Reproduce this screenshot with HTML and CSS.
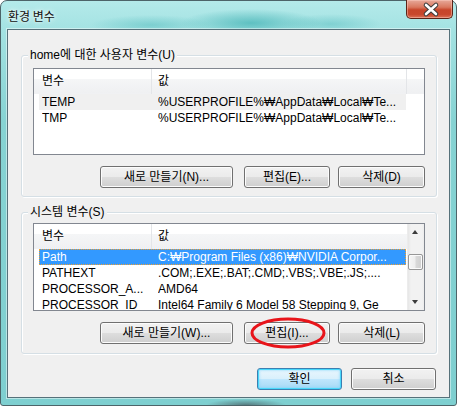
FILE: index.html
```html
<!DOCTYPE html>
<html>
<head>
<meta charset="utf-8">
<title>환경 변수</title>
<link rel="stylesheet" href="styles.css">
</head>
<body>
<div class="window">
  <div class="titlebar">
    <span class="title">환경 변수</span>
    <div class="close">
      <svg width="47" height="19" viewBox="0 0 47 19">
        <path d="M19 5 L29 14 M29 5 L19 14" stroke="#3b3b3b" stroke-width="4.6" stroke-linecap="round"/>
        <path d="M19 5 L29 14 M29 5 L19 14" stroke="#ffffff" stroke-width="2.6" stroke-linecap="round"/>
      </svg>
    </div>
  </div>
  <div class="client">
    <div class="group g1">
      <div class="group-label">home에 대한 사용자 변수(U)</div>
      <div class="list l1">
        <div class="list-main">
          <div class="hdr">
            <div class="h h1">변수</div>
            <div class="h h2">값</div>
            <div class="h h3"></div>
          </div>
          <div class="row inactive"><span class="c1">TEMP</span><span class="c2">%USERPROFILE%₩AppData₩Local₩Te...</span></div>
          <div class="row"><span class="c1">TMP</span><span class="c2">%USERPROFILE%₩AppData₩Local₩Te...</span></div>
        </div>
      </div>
      <div class="btnrow">
        <button class="btn b-wide">새로 만들기(N)...</button>
        <button class="btn b-mid">편집(E)...</button>
        <button class="btn b-del">삭제(D)</button>
      </div>
    </div>

    <div class="group g2">
      <div class="group-label">시스템 변수(S)</div>
      <div class="list l2">
        <div class="list-main">
          <div class="hdr">
            <div class="h h1">변수</div>
            <div class="h h2">값</div>
          </div>
          <div class="row selected"><span class="c1">Path</span><span class="c2">C:₩Program Files (x86)₩NVIDIA Corpor...</span></div>
          <div class="row"><span class="c1">PATHEXT</span><span class="c2">.COM;.EXE;.BAT;.CMD;.VBS;.VBE;.JS;....</span></div>
          <div class="row"><span class="c1">PROCESSOR_A...</span><span class="c2">AMD64</span></div>
          <div class="row"><span class="c1">PROCESSOR_ID</span><span class="c2">Intel64 Family 6 Model 58 Stepping 9, Ge</span></div>
        </div>
        <div class="scrollbar">
          <div class="arrow up"></div>
          <div class="track">
            <div class="thumb"></div>
          </div>
          <div class="arrow down"></div>
        </div>
      </div>
      <div class="btnrow">
        <button class="btn b-wide">새로 만들기(W)...</button>
        <button class="btn b-mid">편집(I)...</button>
        <button class="btn b-del">삭제(L)</button>
      </div>
    </div>

    <div class="dlgbtns">
      <button class="btn b-ok default">확인</button>
      <button class="btn b-ok">취소</button>
    </div>
  </div>

  <svg class="mark" width="80" height="36" viewBox="0 0 80 36">
    <ellipse cx="40" cy="18" rx="36" ry="14" fill="none" stroke="#e8141a" stroke-width="3"/>
  </svg>
</div>
</body>
</html>
```

FILE: styles.css
```css
* { box-sizing: border-box; }

html, body {
  margin: 0;
  padding: 0;
}

body {
  width: 457px;
  height: 406px;
  overflow: hidden;
  background: #ffffff;
  font-family: "Liberation Sans", "Noto Sans CJK KR", sans-serif;
  font-size: 12px;
  color: #000;
}

.window {
  position: relative;
  width: 457px;
  height: 406px;
  display: flex;
  flex-direction: column;
  padding: 0 6px 7px 6px;
  border: 1px solid #4d6469;
  border-radius: 7px 7px 3px 3px;
  background:
    radial-gradient(ellipse 70px 14px at 250px 22px, rgba(70, 180, 182, 0.75), rgba(70, 180, 182, 0)),
    radial-gradient(ellipse 60px 10px at 150px 24px, rgba(90, 190, 192, 0.55), rgba(90, 190, 192, 0)),
    radial-gradient(ellipse 50px 10px at 330px 23px, rgba(90, 190, 192, 0.5), rgba(90, 190, 192, 0)),
    radial-gradient(ellipse 40px 6px at 245px 404px, rgba(70, 90, 95, 0.7), rgba(70, 90, 95, 0)),
    linear-gradient(to bottom, #b4eaea 0px, #a3e2e2 30px, #86d3d3 120px, #7ecfd0 100%);
}

.titlebar {
  height: 28px;
  display: flex;
  justify-content: space-between;
  align-items: flex-start;
  flex: none;
}

.title {
  margin: 8px 0 0 1px;
  font-family: "Noto Sans CJK KR", sans-serif;
  font-size: 12px;
  line-height: 14px;
  color: #101010;
  text-shadow: 0 0 6px rgba(255, 255, 255, 0.95), 0 0 3px rgba(255, 255, 255, 0.9);
}

.close {
  width: 47px;
  height: 19px;
  margin: -1px -3px 0 0;
  border: 1px solid #5b2417;
  border-top: none;
  border-radius: 0 0 5px 5px;
  background: linear-gradient(to bottom, #e7a99a 0%, #d9785f 40%, #c7452a 55%, #c8472c 80%, #dc7257 100%);
  box-shadow: inset 0 0 0 1px rgba(255, 210, 200, 0.45);
}

.close svg { display: block; }

.client {
  flex: 1;
  display: flex;
  flex-direction: column;
  border: 1px solid #56717a;
  box-shadow: 0 0 0 1px rgba(255, 255, 255, 0.45);
  background: #f0f0f0;
  padding: 0 12px 0 13px;
}

.group {
  border: 1px solid #d5dfe5;
  border-radius: 3px;
  box-shadow: inset 1px 1px 0 #ffffff, 1px 1px 0 #ffffff;
  padding: 0 11px 8px 11px;
}

.g1 { margin-top: 25px; }
.g2 { margin-top: 15px; padding-bottom: 9px; }

.group-label {
  width: max-content;
  height: 12px;
  line-height: 12px;
  margin: -7px 0 0 -5px;
  padding: 0 2px;
  background: #f0f0f0;
  white-space: nowrap;
}

.list {
  display: flex;
  border: 1px solid #828790;
  background: #ffffff;
  overflow: hidden;
}

.l1 { height: 87px; margin-top: 7px; }
.l2 { height: 88px; margin-top: 5px; }

.list-main {
  flex: 1;
  min-width: 0;
  overflow: hidden;
}

.hdr {
  display: flex;
  height: 25px;
  background: linear-gradient(to bottom, #ffffff 0%, #ffffff 42%, #f5f6f7 42%, #eff0f2 100%);
  border-bottom: 1px solid #f0f1f3;
}

.h {
  line-height: 25px;
  height: 25px;
  white-space: nowrap;
}

.h1 {
  width: 118px;
  padding-left: 8px;
  border-right: 1px solid #e3e5e8;
}

.h2 {
  width: 255px;
  padding-left: 6px;
  border-right: 1px solid #e3e5e8;
}

.l2 .h2 { width: 254px; border-right: none; }

.h3 { flex: 1; }

.row {
  display: flex;
  height: 16px;
  line-height: 16px;
  width: 367px;
  margin-left: 5px;
  padding-left: 3px;
  white-space: nowrap;
}

.row .c1 {
  width: 116px;
  flex: none;
  overflow: hidden;
}

.row .c2 {
  flex: 1;
  overflow: hidden;
}

.row.inactive { background: #f0f0f0; }

.row.selected {
  background: #3399ff;
  color: #ffffff;
  outline: 1px dotted #f0a030;
  outline-offset: -1px;
}

.scrollbar {
  width: 17px;
  flex: none;
  display: flex;
  flex-direction: column;
  background: linear-gradient(to right, #e6e6e6 0px, #f2f2f2 3px, #f2f2f2 14px, #e9e9e9 17px);
  border-left: 1px solid #ececec;
}

.arrow {
  height: 17px;
  flex: none;
  position: relative;
}

.arrow::after {
  content: "";
  position: absolute;
  left: 4px;
  width: 0;
  height: 0;
  border-left: 3.5px solid transparent;
  border-right: 3.5px solid transparent;
}

.arrow.up::after {
  top: 6px;
  border-bottom: 4px solid #3c3c3c;
}

.arrow.down::after {
  top: 7px;
  border-top: 4px solid #3c3c3c;
}

.track {
  flex: 1;
  padding-top: 13px;
}

.thumb {
  width: 15px;
  height: 16px;
  margin-left: 0;
  border: 1px solid #979797;
  border-radius: 2px;
  background: linear-gradient(to right, #f6f6f6 0%, #eeeeee 45%, #d9d9d9 55%, #cfcfcf 100%);
  box-shadow: inset 0 0 0 1px #fbfbfb;
}

.btnrow {
  display: flex;
  justify-content: flex-end;
  margin-top: 11px;
}

.btn {
  height: 22px;
  padding: 0;
  border: 1px solid #707070;
  border-radius: 3px;
  background: linear-gradient(to bottom, #f2f2f2 0%, #ebebeb 48%, #dddddd 52%, #cfcfcf 100%);
  box-shadow: inset 0 0 0 1px #fcfcfc;
  font-family: "Liberation Sans", "Noto Sans CJK KR", sans-serif;
  font-size: 12px;
  line-height: 18px;
  color: #000;
  text-align: center;
  white-space: nowrap;
}

.b-wide { width: 133px; }
.b-mid { width: 86px; margin-left: 11px; }
.b-del { width: 87px; margin-left: 8px; }

.dlgbtns {
  display: flex;
  justify-content: flex-end;
  margin-top: 14px;
  padding-right: 1px;
}

.b-ok { width: 85px; }
.b-ok + .b-ok { margin-left: 9px; }

.btn.default {
  border-color: #3c7fb1;
  box-shadow: inset 0 0 0 1px #48d8fb, inset 0 0 2px 2px rgba(120, 210, 250, 0.45);
  background: linear-gradient(to bottom, #eaf6fd 0%, #d9f0fc 48%, #bee6fd 52%, #a7d9f5 100%);
}

.mark {
  position: absolute;
  left: 247px;
  top: 314px;
}
```
